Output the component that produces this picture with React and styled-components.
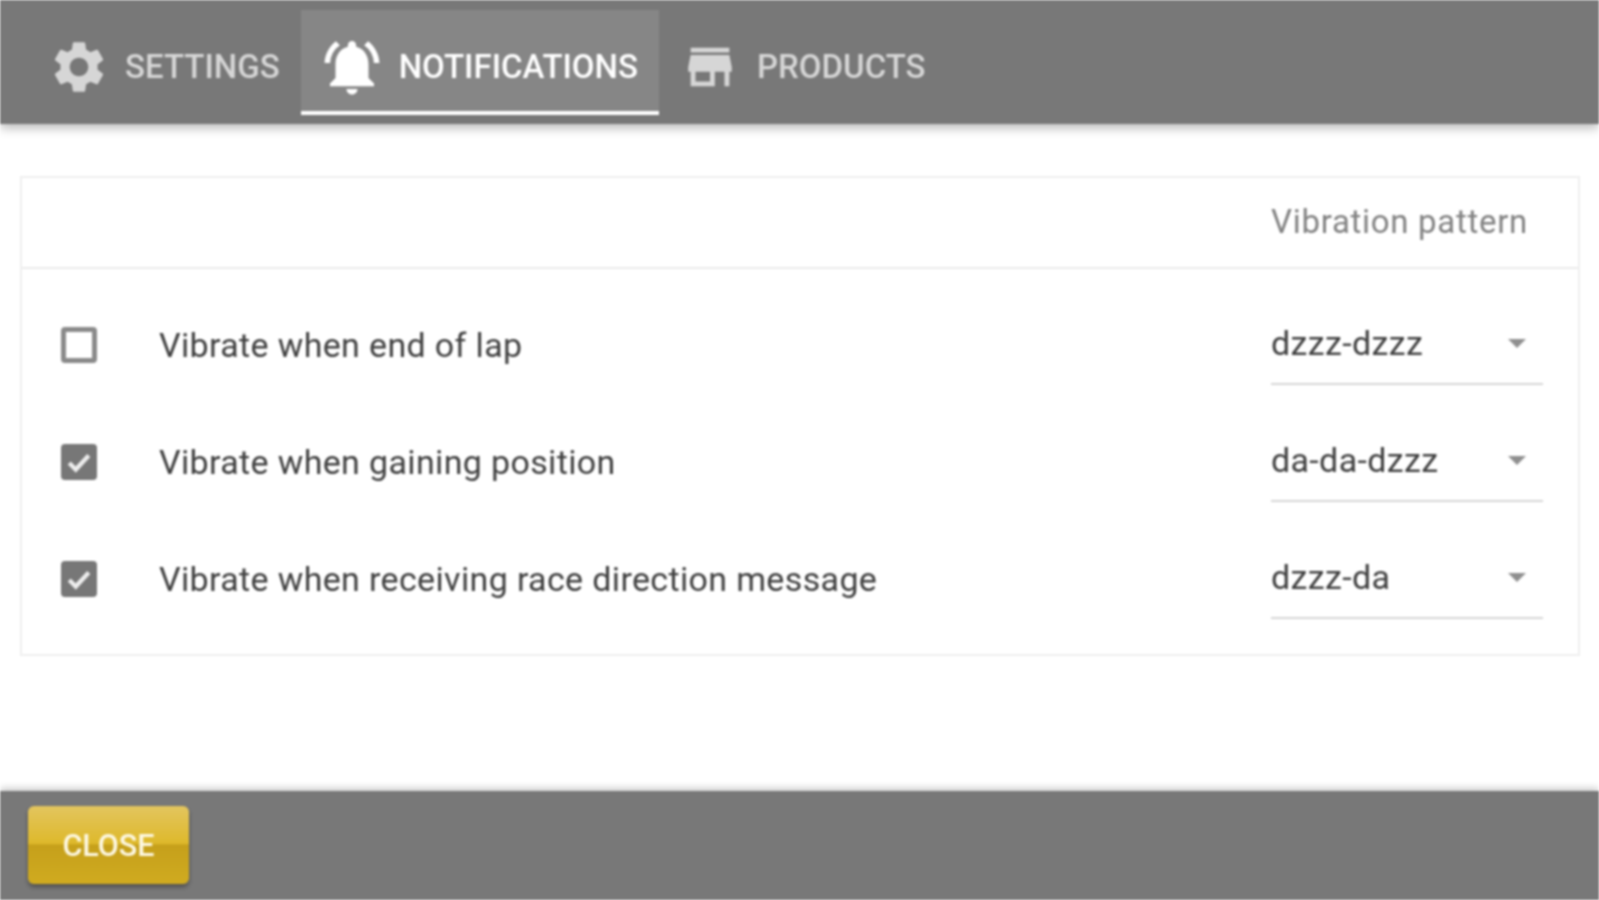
import React from 'react';
import styled, { createGlobalStyle } from 'styled-components';
import { MdSettings, MdNotificationsActive, MdStore } from 'react-icons/md';

const GlobalStyle = createGlobalStyle`
  html, body {
    margin: 0;
    padding: 0;
    background: #fff;
    font-family: Roboto, "Liberation Sans", sans-serif;
  }
`;

const Page = styled.div`
  display: flex;
  flex-direction: column;
  height: 100vh;
  overflow: hidden;
  filter: blur(1.1px);
`;

const TopBar = styled.header`
  display: flex;
  align-items: flex-end;
  flex: 0 0 124px;
  box-sizing: border-box;
  padding: 10px 0 9px 35px;
  background: #787878;
  box-shadow: 0 4px 10px rgba(0, 0, 0, 0.28);
  position: relative;
`;

const Tab = styled.div`
  display: flex;
  align-items: center;
  gap: ${props => props.$gap}px;
  height: 105px;
  box-sizing: border-box;
  padding: 12px 21px 0 ${props => props.$left}px;
  font-size: 33px;
  font-weight: 500;
  color: ${props => (props.$active ? '#fff' : '#d6d6d6')};
  background: ${props => (props.$active ? '#868686' : 'transparent')};
  border-bottom: 4px solid ${props => (props.$active ? '#fff' : 'transparent')};
  text-transform: uppercase;
  svg {
    flex: none;
  }
`;

const Content = styled.main`
  flex: 1;
  padding: 52px 19px 0 20px;
`;

const Card = styled.section`
  border: 2px solid #efefef;
  box-sizing: border-box;
  height: 480px;
`;

const CardHead = styled.div`
  display: flex;
  justify-content: flex-end;
  align-items: center;
  height: 91px;
  box-sizing: border-box;
  padding-right: 50px;
  padding-bottom: 2px;
  border-bottom: 2px solid #ebebeb;
  font-size: 33px;
  letter-spacing: 0.7px;
  color: #828282;
`;

const Rows = styled.div`
  display: grid;
  grid-auto-rows: 117px;
  padding-top: 17px;
`;

const Row = styled.div`
  display: flex;
  align-items: center;
  padding: 0 35px 0 39px;
`;

const Box = styled.span`
  display: flex;
  align-items: center;
  justify-content: center;
  width: 36px;
  height: 36px;
  box-sizing: border-box;
  border-radius: 4px;
  border: 5px solid #8a8a8a;
  background: ${props => (props.$checked ? '#777' : '#fff')};
  ${props => props.$checked && 'border-color: #777;'}
`;

const Label = styled.span`
  flex: 1;
  margin-left: 62px;
  font-size: 34px;
  letter-spacing: 0.35px;
  color: #404040;
`;

const Select = styled.div`
  position: relative;
  display: flex;
  align-items: center;
  justify-content: space-between;
  width: 272px;
  height: 80px;
  box-sizing: border-box;
  padding: 0 16px 2px 0;
  border-bottom: 2px solid #d6d6d6;
  font-size: 34px;
  letter-spacing: 0.35px;
  color: #404040;
`;

const Caret = styled.span`
  width: 0;
  height: 0;
  margin: 2px 1px 0 0;
  border-left: 9px solid transparent;
  border-right: 9px solid transparent;
  border-top: 9px solid #8f8f8f;
`;

const BottomBar = styled.footer`
  flex: 0 0 109px;
  box-sizing: border-box;
  padding: 15px 0 0 28px;
  background: #787878;
  box-shadow: 0 -3px 7px rgba(0, 0, 0, 0.2);
  position: relative;
`;

const CloseButton = styled.button`
  display: block;
  width: 161px;
  height: 78px;
  padding: 0;
  border: none;
  border-radius: 6px;
  font-family: inherit;
  font-size: 30.5px;
  font-weight: 500;
  color: #fdf8e4;
  background: linear-gradient(#e3c55f 0%, #deb92b 48%, #c6a01b 50%, #d0ab20 100%);
  box-shadow: 0 3px 4px rgba(0, 0, 0, 0.35);
`;

const Check = () => (
  <svg width="26" height="26" viewBox="0 0 24 24" fill="none" stroke="#ededed" strokeWidth="4">
    <path d="M3 13l6 6L21 6" />
  </svg>
);

const settings = [
  { label: 'Vibrate when end of lap', pattern: 'dzzz-dzzz', checked: false },
  { label: 'Vibrate when gaining position', pattern: 'da-da-dzzz', checked: true },
  { label: 'Vibrate when receiving race direction message', pattern: 'dzzz-da', checked: true },
];

export default function App() {
  return (
    <Page>
      <GlobalStyle />
      <TopBar>
        <Tab $left={13} $gap={15}><MdSettings size={62} />Settings</Tab>
        <Tab $active $left={18} $gap={14}><MdNotificationsActive size={66} />Notifications</Tab>
        <Tab $left={22} $gap={18}><MdStore size={58} />Products</Tab>
      </TopBar>
      <Content>
        <Card>
          <CardHead><span>Vibration pattern</span></CardHead>
          <Rows>
            {settings.map(s => (
              <Row key={s.label}>
                <Box $checked={s.checked}>{s.checked && <Check />}</Box>
                <Label>{s.label}</Label>
                <Select>
                  {s.pattern}
                  <Caret />
                </Select>
              </Row>
            ))}
          </Rows>
        </Card>
      </Content>
      <BottomBar>
        <CloseButton>CLOSE</CloseButton>
      </BottomBar>
    </Page>
  );
}
